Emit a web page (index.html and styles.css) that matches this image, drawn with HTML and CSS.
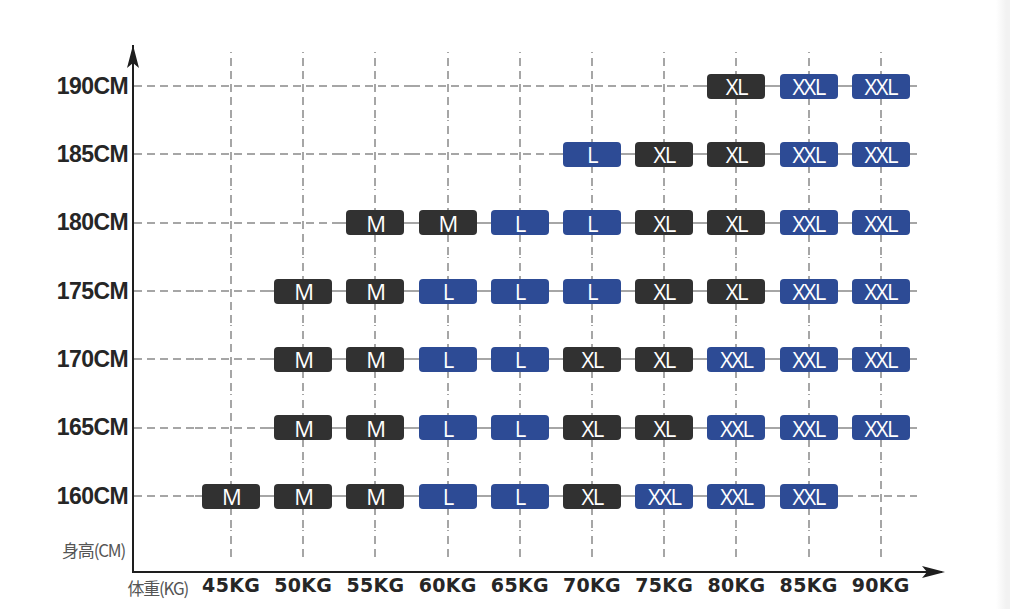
FILE: index.html
```html
<!DOCTYPE html>
<html lang="zh">
<head>
    <meta charset="UTF-8">
    <title>尺码对照表</title>
    <link rel="stylesheet" href="styles.css">
</head>
<body>
    <div class="chart">
        <div class="ylabels">
            <div class="ylabel">190CM</div>
            <div class="ylabel">185CM</div>
            <div class="ylabel">180CM</div>
            <div class="ylabel">175CM</div>
            <div class="ylabel">170CM</div>
            <div class="ylabel">165CM</div>
            <div class="ylabel">160CM</div>
            <div class="ylabel axis-name">身高(CM)</div>
        </div>

        <div class="plot" id="plot">
            <svg class="arrow arrow-up" width="14" height="24" viewBox="0 0 14 24">
                <path d="M7 0 L13 23 L7 18 L1 23 Z" fill="#1e1e1e"/>
            </svg>
            <svg class="arrow arrow-right" width="24" height="14" viewBox="0 0 24 14">
                <path d="M24 7 L1 1 L6 7 L1 13 Z" fill="#1e1e1e"/>
            </svg>
        </div>

        <div class="xlabels">
            <div class="xlabel axis-name">体重(KG)</div>
            <div class="xlabel">45KG</div>
            <div class="xlabel">50KG</div>
            <div class="xlabel">55KG</div>
            <div class="xlabel">60KG</div>
            <div class="xlabel">65KG</div>
            <div class="xlabel">70KG</div>
            <div class="xlabel">75KG</div>
            <div class="xlabel">80KG</div>
            <div class="xlabel">85KG</div>
            <div class="xlabel">90KG</div>
        </div>
    </div>

    <script>
        // rows from 190CM down to 160CM, columns 45KG .. 90KG
        const sizes = [
            ["", "", "", "", "", "", "", "XL", "XXL", "XXL"],
            ["", "", "", "", "", "L", "XL", "XL", "XXL", "XXL"],
            ["", "", "M", "M", "L", "L", "XL", "XL", "XXL", "XXL"],
            ["", "M", "M", "L", "L", "L", "XL", "XL", "XXL", "XXL"],
            ["", "M", "M", "L", "L", "XL", "XL", "XXL", "XXL", "XXL"],
            ["", "M", "M", "L", "L", "XL", "XL", "XXL", "XXL", "XXL"],
            ["M", "M", "M", "L", "L", "XL", "XXL", "XXL", "XXL", ""]
        ];

        let html = "";
        sizes.forEach(row => {
            html += '<div class="cell h"></div>';
            row.forEach(size => {
                let badge = "";
                if (size) {
                    const tone = (size === "L" || size === "XXL") ? "blue" : "dark";
                    badge = `<span class="badge ${tone}">${size}</span>`;
                }
                html += `<div class="cell h v">${badge}</div>`;
            });
            html += '<div></div>';
        });
        html += '<div></div>';
        for (let i = 0; i < 10; i++) html += '<div class="cell v"></div>';
        html += '<div></div>';

        document.getElementById("plot").insertAdjacentHTML("afterbegin", html);
    </script>
</body>
</html>
```

FILE: styles.css
```css
body {
    margin: 0;
    background: linear-gradient(90deg, #fff 996px, #f2f2f2 1006px);
    color: #262626;
    font-family: "Liberation Sans", Arial, sans-serif;
}
.chart {
    display: grid;
    grid-template-columns: 132px 810px;
    padding-top: 45px;
    height: 564px;
}
.ylabels {
    padding-top: 7px;
    display: grid;
    grid-template-rows: repeat(7, 68.33px) 32px;
}
.ylabel {
    display: flex;
    align-items: center;
    justify-content: flex-end;
    padding-right: 4px;
    font-size: 23px;
    font-weight: bold;
    letter-spacing: -0.6px;
}
.ylabel.axis-name {
    align-items: flex-end;
    padding-right: 7px;
    padding-bottom: 0;
}
.axis-name {
    font-family: "Noto Sans CJK SC", sans-serif;
    font-size: 17px;
    font-weight: normal;
    color: #555;
    letter-spacing: -1.2px;
    white-space: nowrap;
}
.plot {
    position: relative;
    border-left: 2px solid #1e1e1e;
    border-bottom: 2px solid #1e1e1e;
    padding-top: 7px;
    display: grid;
    grid-template-columns: 61px repeat(10, 72.2px) 1fr;
    grid-template-rows: repeat(7, 68.33px) 32px;
}
.cell {
    display: flex;
    align-items: center;
    justify-content: center;
}
.cell.h {
    background-image: linear-gradient(90deg, #a6a6a6 8px, transparent 8px);
    background-size: 13px 2px;
    background-repeat: repeat-x;
    background-position: 0 center;
}
.cell.v {
    background-image: linear-gradient(#a6a6a6 8px, transparent 8px);
    background-size: 2px 13px;
    background-repeat: repeat-y;
    background-position: center 6px;
}
.cell.h.v {
    background-image: linear-gradient(#a6a6a6 8px, transparent 8px), linear-gradient(90deg, #a6a6a6 8px, transparent 8px);
    background-size: 2px 13px, 13px 2px;
    background-repeat: repeat-y, repeat-x;
    background-position: center 6px, 0 center;
}
.badge {
    width: 58px;
    height: 25px;
    border-radius: 4px;
    display: flex;
    align-items: center;
    justify-content: center;
    color: #fff;
    font-family: "Open Sans", "Liberation Sans", sans-serif;
    font-weight: 400;
    font-size: 22px;
    letter-spacing: -1.5px;
    line-height: 1;
}
.badge.dark {
    background-color: #313131;
}
.badge.blue {
    background-color: #2d4b95;
}
.arrow {
    position: absolute;
}
.arrow-up {
    left: -8px;
    top: 0;
}
.arrow-right {
    right: -3px;
    bottom: -8px;
}
.xlabels {
    grid-column: 2;
    display: grid;
    grid-template-columns: 63px repeat(10, 72.2px);
    padding-top: 1px;
}
.xlabel {
    display: flex;
    justify-content: center;
    font-family: "DejaVu Sans", sans-serif;
    font-weight: bold;
    font-size: 19px;
    letter-spacing: 0.3px;
    color: #262626;
}
.xlabel.axis-name {
    justify-content: flex-end;
    padding-right: 7px;
    padding-top: 1px;
    font-family: "Noto Sans CJK SC", sans-serif;
    font-weight: normal;
    font-size: 17px;
    letter-spacing: -1.2px;
    color: #555;
}
```
